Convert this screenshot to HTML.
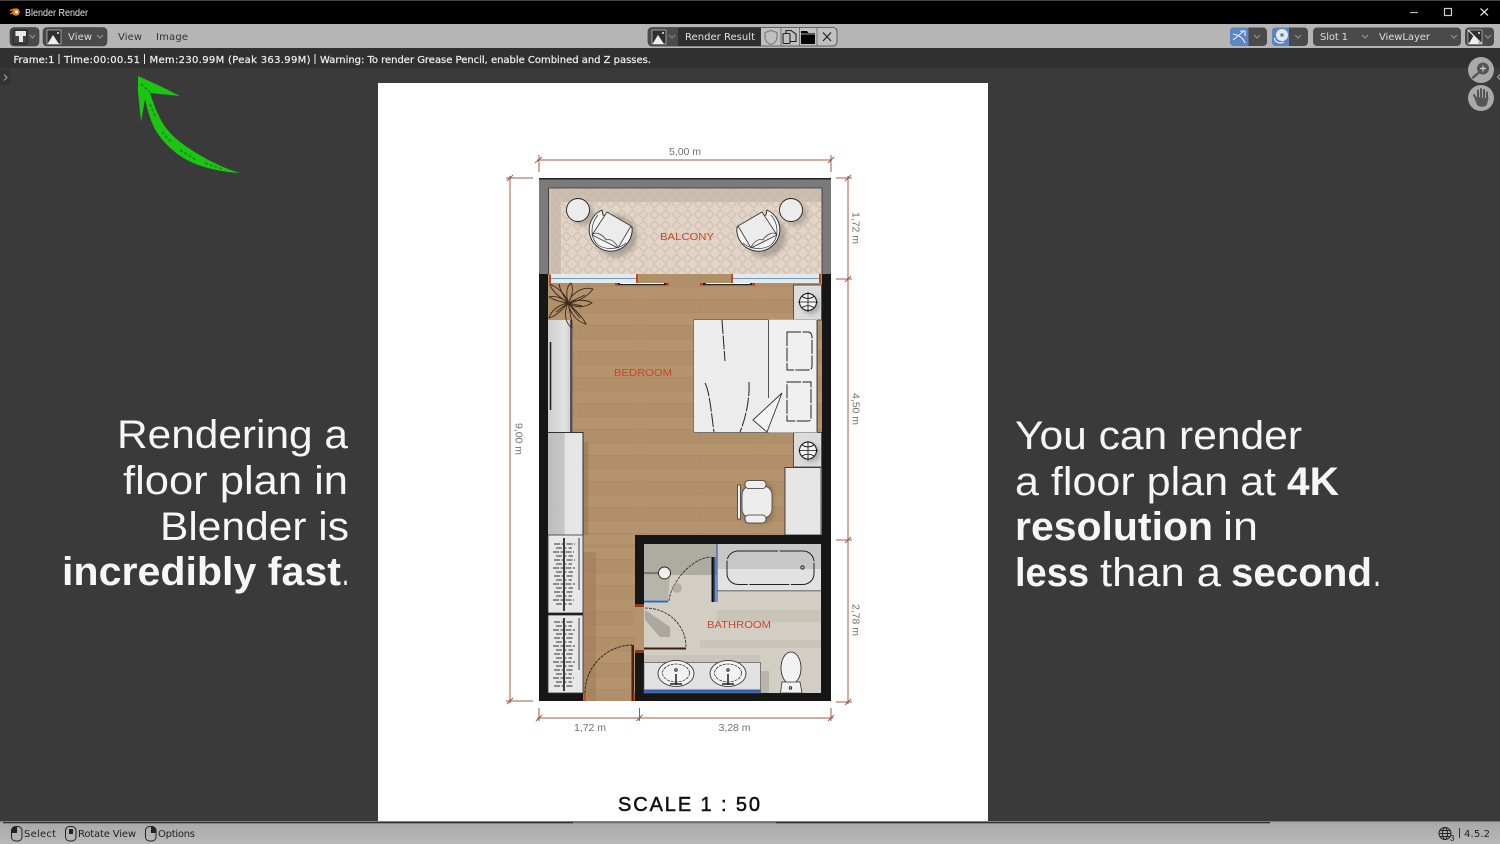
<!DOCTYPE html>
<html lang="en"><head><meta charset="utf-8"><title>Blender Render</title>
<style>
html,body{margin:0;padding:0;background:#3a3a3a;width:1500px;height:844px;overflow:hidden}
svg{display:block}
.ui{font-family:"DejaVu Sans","Liberation Sans",sans-serif;font-size:10px}
.info{font-family:"DejaVu Sans","Liberation Sans",sans-serif;font-size:10px;fill:#ececec;stroke:#ececec;stroke-width:.25}
.big{font-family:"Liberation Sans",sans-serif;font-size:40px;fill:#f6f6f6}
.b{font-weight:700}
.dim{font-family:"Liberation Sans",sans-serif;font-size:10.5px;fill:#707070}
.lab{font-family:"Liberation Sans",sans-serif;font-size:10.5px;fill:#c8492a}
</style></head><body>
<svg width="1500" height="844" viewBox="0 0 1500 844" xmlns="http://www.w3.org/2000/svg">
<defs>
<pattern id="dia" width="11" height="11" patternUnits="userSpaceOnUse"><rect width="11" height="11" fill="#e2d5c7"/><path d="M5.500 1 10 5.500 5.500 10 1 5.500Z" fill="none" stroke="#d3c5b5" stroke-width="1.500"/></pattern>
<pattern id="wood" width="120" height="26" patternUnits="userSpaceOnUse"><rect width="120" height="26" fill="#b4936d"/><rect y="13" width="120" height="13" fill="#b08f69"/><path d="M0 .5H120M0 13.5H120" stroke="#a98a65" stroke-width=".7"/><path d="M40 0V13M100 13V26" stroke="#a98a65" stroke-width=".5"/></pattern>
<linearGradient id="bot" x1="0" x2="0" y1="0" y2="1"><stop offset="0" stop-color="#a8a8a8"/><stop offset="1" stop-color="#b8b8b8"/></linearGradient>
<linearGradient id="cl" x1="0" x2="1" y1="0" y2="0"><stop offset="0" stop-color="#bdbdbd"/><stop offset=".45" stop-color="#c6c6c6"/><stop offset=".5" stop-color="#e4e4e4"/><stop offset="1" stop-color="#e6e6e6"/></linearGradient>
<linearGradient id="cl2" x1="0" x2="1" y1="0" y2="0"><stop offset="0" stop-color="#cfcfcf"/><stop offset=".7" stop-color="#e2e2e2"/><stop offset="1" stop-color="#c8c8c8"/></linearGradient>
<filter id="sh" x="-30%" y="-30%" width="160%" height="160%"><feGaussianBlur stdDeviation="2.500"/></filter>
<filter id="soft" x="-5%" y="-5%" width="110%" height="110%"><feGaussianBlur stdDeviation=".35"/></filter>
</defs>

<rect width="1500" height="844" fill="#3a3a3a"/>
<rect width="1500" height="24" fill="#000"/><rect width="1500" height="1" fill="#444"/>
<rect y="24" width="1500" height="24" fill="#b5b5b5"/>
<rect y="48" width="1500" height="20" fill="#303030"/>

<!-- title bar -->
<g>
<circle cx="16" cy="12" r="3.800" fill="#e87d0d"/><path d="M10 10.500 14 9M10.500 14 14 12" stroke="#e87d0d" stroke-width="1.300"/><circle cx="16.500" cy="12" r="1.500" fill="#fff"/>
<text x="25" y="16" font-family="Liberation Sans,sans-serif" font-size="10.500" fill="#e8e8e8" textLength="63" lengthAdjust="spacingAndGlyphs">Blender Render</text>
<path d="M1410 12.500H1418" stroke="#bbb" stroke-width="1.200"/>
<rect x="1444.500" y="8.500" width="7" height="7" fill="none" stroke="#ccc" stroke-width="1.200"/>
<path d="M1480.500 8.500 1488 15.500M1488 8.500 1480.500 15.500" stroke="#ddd" stroke-width="1.200"/>
</g>

<!-- top toolbar -->
<g>
<rect x="10" y="27.500" width="29" height="18.500" rx="4" fill="#4a4a4a" stroke="#3a3a3a" stroke-width=".6"/>
<rect x="13" y="30" width="14" height="14" rx="1" fill="#444" stroke="#222" stroke-width="1"/>
<path d="M15.500 31H26V36H23V42H19V36H15.500Z" fill="#e8e8e8"/>
<path d="M30 35 32.500 38 35 35" fill="none" stroke="#999" stroke-width="1"/>
<rect x="43" y="27.500" width="64" height="18.500" rx="4" fill="#4a4a4a" stroke="#3a3a3a" stroke-width=".6"/>
<rect x="47" y="30" width="14" height="14" fill="#2f2f2f" stroke="#ddd" stroke-width=".6"/>
<path d="M47.500 44 53 35 59 44Z" fill="#eee"/><circle cx="58" cy="33" r="1" fill="#eee"/>
<text class="ui" x="68" y="40" fill="#ddd" textLength="24">View</text>
<path d="M97 35 100 38 103 35" fill="none" stroke="#999" stroke-width="1"/>
<text class="ui" x="118" y="40" fill="#333" textLength="24">View</text>
<text class="ui" x="156" y="40" fill="#333" textLength="32">Image</text>

<rect x="648" y="27.500" width="189" height="18.500" rx="4" fill="#c0c0c0" stroke="#444" stroke-width=".8"/>
<path d="M652 27.500H678V46H652a4 4 0 0 1-4-4V31.500a4 4 0 0 1 4-4Z" fill="#4a4a4a"/>
<rect x="678" y="27.500" width="83" height="18.500" fill="#2f2f2f"/>
<rect x="652" y="30" width="14" height="14" fill="#2f2f2f" stroke="#ddd" stroke-width=".6"/>
<path d="M652.500 44 658 35 664 44Z" fill="#eee"/><circle cx="663" cy="33" r="1" fill="#eee"/>
<path d="M669 35 672 38 675 35" fill="none" stroke="#888" stroke-width="1"/>
<text class="ui" x="685" y="40" fill="#e2e2e2" textLength="70">Render Result</text>
<path d="M771 30.500 777 32.500V37C777 41 774 43.500 771 44.500 768 43.500 765 41 765 37V32.500Z" fill="none" stroke="#777" stroke-width="1.100"/>
<path d="M781 46V27.500M799.500 46V27.500M817 46V27.500" stroke="#555" stroke-width=".7"/>
<path d="M786 33.500V30.500H791L796 34V41.500H790" fill="none" stroke="#222" stroke-width="1.100"/><rect x="783" y="33.500" width="7" height="10" rx="1" fill="none" stroke="#222" stroke-width="1.100"/>
<path d="M801 31H807L808.500 33H815V44H801Z" fill="#000"/><path d="M801 34H815" stroke="#ccc" stroke-width=".8"/>
<path d="M823 32.500 831 41M831 32.500 823 41" stroke="#222" stroke-width="1.200"/>

<rect x="1230" y="27.500" width="37" height="18.500" rx="4" fill="#4a4a4a"/>
<path d="M1234 27.500H1248.500V46H1234a4 4 0 0 1-4-4V31.500a4 4 0 0 1 4-4Z" fill="#5a86c4"/>
<path d="M1233 34C1239 35 1243 38 1245 43M1233 40 1244 31M1240 31H1245V36" fill="none" stroke="#eef" stroke-width="1.100"/>
<path d="M1254 35 1257 38 1260 35" fill="none" stroke="#999" stroke-width="1"/>
<rect x="1272" y="27.500" width="36" height="18.500" rx="4" fill="#4a4a4a"/>
<path d="M1276 27.500H1289V46H1276a4 4 0 0 1-4-4V31.500a4 4 0 0 1 4-4Z" fill="#5a86c4"/>
<circle cx="1282" cy="35" r="6" fill="#e8e8e8"/><circle cx="1282" cy="35" r="1.800" fill="#5a86c4"/><path d="M1274.500 38C1274.500 42.500 1280 44 1284 42" fill="none" stroke="#eef" stroke-width="1.200"/>
<path d="M1295 35 1298 38 1301 35" fill="none" stroke="#999" stroke-width="1"/>
<rect x="1313" y="27.500" width="148" height="18.500" rx="4" fill="#4a4a4a"/>
<text class="ui" x="1320" y="40" fill="#ddd" textLength="28">Slot 1</text>
<path d="M1362 35 1365 38 1368 35M1451 35 1454 38 1457 35" fill="none" stroke="#999" stroke-width="1"/>
<text class="ui" x="1379" y="40" fill="#ddd" textLength="51">ViewLayer</text>
<rect x="1465" y="27.500" width="29" height="18.500" rx="4" fill="#4a4a4a"/>
<rect x="1468" y="30" width="14" height="14" fill="#2f2f2f" stroke="#ddd" stroke-width=".6"/>
<path d="M1468.500 44 1474 35 1480 44Z" fill="#eee"/><circle cx="1479" cy="33" r="1" fill="#eee"/><path d="M1468 30 1482 44" stroke="#eee" stroke-width="1.200"/>
<path d="M1485 35 1488 38 1491 35" fill="none" stroke="#999" stroke-width="1"/>
</g>

<!-- info line -->
<text class="info" x="13.500" y="63" textLength="41">Frame:1</text>
<path d="M59 54V64M144.500 54V64M315 54V64" stroke="#ececec" stroke-width="1"/>
<text class="info" x="64" y="63" textLength="76">Time:00:00.51</text>
<text class="info" x="149.500" y="63" textLength="161">Mem:230.99M (Peak 363.99M)</text>
<text class="info" x="320" y="63" textLength="331">Warning: To render Grease Pencil, enable Combined and Z passes.</text>

<!-- side tabs & gizmos -->
<rect x="0" y="69" width="10" height="16" rx="2" fill="#333"/>
<path d="M4 74.500 7 77.500 4 80.500" fill="none" stroke="#aaa" stroke-width="1"/>
<path d="M1500 74.500 1497.500 77 1500 79.500" fill="none" stroke="#aaa" stroke-width="1"/>
<circle cx="1481" cy="70" r="13" fill="#a9a9a9"/>
<circle cx="1483" cy="68.500" r="6" fill="#555"/><path d="M1483 65.500V71.500M1480 68.500H1486" stroke="#ccc" stroke-width="1.200"/><path d="M1478.500 73 1473 77.500" stroke="#555" stroke-width="2.400" stroke-linecap="round"/>
<circle cx="1481" cy="98" r="13" fill="#a9a9a9"/>
<path d="M1476 99 1474 95M1478 97V90.500M1481 97V89M1484 97V90M1487 98V92.500M1475 97 1478 104.500C1479 106 1485 106.500 1486 104L1487.500 98" stroke="#555" stroke-width="2" fill="#555" stroke-linecap="round"/>

<!-- paper -->
<rect x="378" y="83" width="610" height="738" fill="#fff"/>

<!-- plan -->
<g filter="url(#soft)">
<rect x="539" y="178" width="292" height="523" fill="#141414"/>
<rect x="539" y="178" width="292" height="96" fill="#7a7a7a"/>
<rect x="539" y="178" width="292" height="1.500" fill="#222"/>
<rect x="549" y="188" width="273" height="86" fill="url(#dia)"/>
<path d="M549 188H822V202H561V274H549Z" fill="#bfb0a0" opacity=".6"/>
<path d="M548.500 188V274M822 188V274M549 188H822" stroke="#333" stroke-width=".8" fill="none"/>
<rect x="548" y="274" width="274" height="261" fill="url(#wood)"/>
<rect x="583" y="535" width="52" height="166" fill="url(#wood)"/>
<rect x="583" y="552" width="13" height="149" fill="#a07c58" opacity=".55"/>
<rect x="583" y="535" width="52" height="8" fill="#b4936d"/>
<!-- balcony window -->
<rect x="550" y="274" width="87" height="9" fill="#e8e8e8"/>
<rect x="732" y="274" width="88" height="9" fill="#e8e8e8"/>
<path d="M550 278.500H637M732 278.500H820" stroke="#6a9cc9" stroke-width="1"/>
<path d="M550 274.500V283M637 274V283M732 274V283M820 274V283" stroke="#c5461c" stroke-width="2"/>
<rect x="617" y="283" width="51" height="2.200" fill="#222"/><rect x="620" y="283" width="44" height="1" fill="#fff"/>
<rect x="702" y="283" width="51" height="2.200" fill="#222"/><rect x="706" y="283" width="44" height="1" fill="#fff"/>
<rect x="615" y="283" width="3" height="2.500" fill="#b5431c"/><rect x="666" y="283" width="3" height="2.500" fill="#b5431c"/><rect x="700" y="283" width="3" height="2.500" fill="#b5431c"/><rect x="752" y="283" width="3" height="2.500" fill="#b5431c"/>

<!-- balcony furniture -->
<circle cx="583" cy="214" r="11.500" fill="#8a7f74" opacity=".5" filter="url(#sh)"/>
<circle cx="796" cy="214" r="11.500" fill="#8a7f74" opacity=".5" filter="url(#sh)"/>
<circle cx="578" cy="210" r="11.500" fill="#ececec" stroke="#222" stroke-width=".9"/>
<circle cx="791" cy="210" r="11.500" fill="#ececec" stroke="#222" stroke-width=".9"/>
<circle cx="616" cy="236" r="21" fill="#8a7f74" opacity=".55" filter="url(#sh)"/>
<circle cx="765" cy="236" r="21" fill="#8a7f74" opacity=".55" filter="url(#sh)"/>
<g id="chairL">
<path d="M602 210A21.500 21.500 0 1 0 632 227L626 226 603 215Z" fill="#f4f4f4" stroke="#222" stroke-width=".9"/>
<path d="M598 215C590 224 590 238 598 245 606 250 618 250 626 243" fill="none" stroke="#333" stroke-width=".7"/>
<path d="M607 212 631 226 618 248 592 235Z" fill="#ececec" stroke="#333" stroke-width=".8"/>
<path d="M592 235C596 230 604 236 606 240 610 238 616 242 618 248" fill="none" stroke="#333" stroke-width=".7"/>
</g>
<g transform="translate(1369,0) scale(-1,1)">
<path d="M602 210A21.500 21.500 0 1 0 632 227L626 226 603 215Z" fill="#f4f4f4" stroke="#222" stroke-width=".9"/>
<path d="M598 215C590 224 590 238 598 245 606 250 618 250 626 243" fill="none" stroke="#333" stroke-width=".7"/>
<path d="M607 212 631 226 618 248 592 235Z" fill="#ececec" stroke="#333" stroke-width=".8"/>
<path d="M592 235C596 230 604 236 606 240 610 238 616 242 618 248" fill="none" stroke="#333" stroke-width=".7"/>
</g>
<text class="lab" x="660" y="240" textLength="54" lengthAdjust="spacingAndGlyphs">BALCONY</text>

<!-- plant + left closet -->
<rect x="548" y="320" width="24" height="112" fill="url(#cl2)"/>
<rect x="570" y="320" width="2.500" height="112" fill="#555"/>
<path d="M550.500 342V410" stroke="#222" stroke-width="1.600"/>
<g fill="none" stroke="#3a2a1e" stroke-width=".9">
<path d="M568 303C558 296 551 290 550 284 558 288 566 294 568 303ZM568 303C566 294 566 287 571 283 574 289 572 297 568 303ZM568 303C572 293 582 286 593 289 588 296 578 302 568 303ZM568 303C578 299 588 300 592 303 584 308 575 308 568 303ZM568 303C574 309 582 316 586 324 577 322 570 313 568 303ZM568 303C570 312 572 320 572 328 564 322 564 312 568 303ZM568 303C562 310 556 316 549 318 551 311 558 305 568 303ZM568 303C560 302 554 300 549 297 556 295 562 298 568 303ZM568 303C563 295 560 290 559 284M568 303 585 295M568 303 582 306M568 303 580 318M568 303 556 312"/>
</g>
<!-- block -->
<rect x="548" y="432.500" width="35" height="102.500" fill="url(#cl)"/>
<path d="M548 432.500H583V535" fill="none" stroke="#333" stroke-width="1"/>
<rect x="583.500" y="442" width="5" height="93" fill="#96764f" opacity=".55"/>
<!-- wardrobes -->
<rect x="548" y="535" width="35" height="78" fill="#e8e8e8" stroke="#333" stroke-width=".8"/>
<rect x="548" y="615" width="35" height="78" fill="#e8e8e8" stroke="#333" stroke-width=".8"/>
<path d="M564 538V611M564 618V691" stroke="#111" stroke-width="1.600"/>
<path d="M579 538V590M579 618V670" stroke="#777" stroke-width="1.500"/>
<path d="M554 544H575M556 548H572M553 552H574M556 556H573M554 560H575M556 564H572M553 568H575M556 572H573M554 576H574M556 580H572M553 584H575M556 588H573M554 592H574M556 596H572M553 600H574M556 604H572M554 622H574M556 626H572M553 630H575M556 634H573M554 638H574M556 642H572M553 646H575M556 650H573M554 654H574M556 658H572M553 662H575M556 666H573M554 670H574M556 674H572M553 678H574M556 682H572M554 686H574" stroke="#333" stroke-width=".9" stroke-dasharray="6 1.500 3 2"/>
<!-- door -->
<path d="M585 693A48 48 0 0 1 632 645" fill="none" stroke="#222" stroke-width=".9" stroke-dasharray="3 1"/>
<rect x="631.500" y="645" width="2.500" height="56" fill="#4a2015"/>
<rect x="583.500" y="693" width="2" height="8" fill="#c5461c"/><rect x="633.500" y="693" width="2" height="8" fill="#c5461c"/>

<!-- nightstands -->
<rect x="793.500" y="285" width="28" height="35" fill="#dcdcdc" stroke="#444" stroke-width=".9"/>
<rect x="793.500" y="432.500" width="28" height="34.500" fill="#dcdcdc" stroke="#444" stroke-width=".9"/>
<circle cx="811" cy="305" r="9" fill="#888" opacity=".6" filter="url(#sh)"/><circle cx="811" cy="453" r="9" fill="#888" opacity=".6" filter="url(#sh)"/>
<g fill="#f2f2f2" stroke="#111" stroke-width="1"><circle cx="808" cy="302" r="8.500"/><circle cx="808" cy="450.500" r="8.500"/></g>
<path d="M808 292V312M798 302H818M802 296.500C806 299 810 299 814 296.500M802 307.500C806 305 810 305 814 307.500M808 441V460.500M798.500 450.500H818M802 445C806 447.500 810 447.500 814 445M802 456C806 453.500 810 453.500 814 456" stroke="#111" stroke-width=".8" fill="none"/>
<!-- desk -->
<rect x="785" y="467.500" width="36" height="67.500" fill="#e6e6e6" stroke="#333" stroke-width=".9"/>
<!-- bed -->
<rect x="693.500" y="319.500" width="124" height="113" rx="2" fill="#ececec" stroke="#555" stroke-width=".7"/>
<rect x="768.500" y="319.500" width="48.500" height="113" fill="#f0f0f0"/>
<path d="M768.500 320V398M817 320V432" stroke="#444" stroke-width=".9"/>
<g fill="none" stroke="#222" stroke-width="1" stroke-dasharray="14 1.500">
<path d="M787 332H808Q812 332 812 338V366Q812 370 808 370H787Z"/>
<path d="M787 382H811V418Q811 421 808 421H787Z"/>
<path d="M722 320 725 361"/><path d="M705 383C710 392 712 420 714 432"/><path d="M749 382C750 400 745 420 740 432"/>
</g>
<path d="M782 393 753 420 767 432Z" fill="#f4f4f4" stroke="#333" stroke-width=".9"/>
<!-- chair -->
<rect x="743" y="483" width="30" height="40" rx="8" fill="#7a5e42" opacity=".55" filter="url(#sh)"/>
<rect x="742" y="486" width="30" height="32" rx="9" fill="#ececec" stroke="#444" stroke-width=".8"/>
<rect x="745" y="480.500" width="21" height="8" rx="3.500" fill="#eee" stroke="#333" stroke-width=".8"/>
<rect x="745" y="515" width="21" height="8" rx="3.500" fill="#eee" stroke="#333" stroke-width=".8"/>
<rect x="737.500" y="485" width="3" height="34" fill="#f4f4f4" stroke="#222" stroke-width=".7"/>
<text class="lab" x="614" y="376" textLength="58" lengthAdjust="spacingAndGlyphs">BEDROOM</text>

<!-- bathroom -->
<path d="M635 535H831V701H635V650H644V693H821V544H644V607H635Z" fill="#141414"/>
<rect x="644" y="544" width="177" height="149" fill="#d3cec3"/>
<path d="M717 610H821V622H717ZM644 655H760V662H644ZM700 640H821V648H700Z" fill="#cac4b8"/>
<rect x="644" y="544" width="73" height="31" fill="#aeaba1"/>
<path d="M644 575H670L668 600H644Z" fill="#b7b4aa"/>
<path d="M645 610 670 627V637H660L645 620Z" fill="#aba89f"/>
<rect x="635" y="607" width="9" height="43" fill="#b4936d"/>
<rect x="635" y="604" width="9" height="3" fill="#8a3a1e"/><rect x="635" y="650" width="9" height="3" fill="#8a3a1e"/>
<!-- tub -->
<rect x="717" y="544" width="104" height="47" fill="#e2e2e2"/>
<rect x="717" y="544" width="104" height="25" fill="#c7c7c7"/>
<rect x="727" y="551" width="87" height="33.500" rx="11" fill="none" stroke="#222" stroke-width="1" stroke-dasharray="40 1.500"/>
<circle cx="802.500" cy="567.500" r="1.700" fill="none" stroke="#222"/>
<rect x="717" y="590" width="104" height="1.500" fill="#888"/>
<rect x="711.500" y="557" width="4" height="45" fill="#2c4f8e"/><rect x="711.500" y="557" width="2" height="45" fill="#111"/>
<rect x="716.500" y="544" width="1" height="58" fill="#264a90"/>
<rect x="644" y="600.500" width="24" height="2" fill="#2f67bd"/>
<path d="M669 601C670 585 690 558 711 557" fill="none" stroke="#222" stroke-width=".8" stroke-dasharray="3 1"/>
<circle cx="664.500" cy="573" r="6" fill="#f0f0f0" stroke="#222" stroke-width=".9"/>
<path d="M644 573H658" stroke="#555" stroke-width="1.200"/>
<circle cx="677" cy="588" r="5" fill="#a09d94" opacity=".6"/>
<path d="M645 608C668 608 686 625 686 647" fill="none" stroke="#222" stroke-width=".8" stroke-dasharray="3 1"/>
<rect x="644" y="647.500" width="42" height="2" fill="#3e1b10"/>
<text class="lab" x="707" y="628" textLength="64" lengthAdjust="spacingAndGlyphs">BATHROOM</text>
<!-- vanity -->
<rect x="761" y="671" width="8" height="22" fill="#a9a59a" opacity=".6"/>
<rect x="644" y="662.500" width="116.500" height="30.500" fill="#e2e2e2" stroke="#555" stroke-width=".7"/>
<rect x="644" y="689.500" width="116.500" height="3" fill="#2f62b8"/>
<g fill="#f2f2f2" stroke="#222" stroke-width=".8"><ellipse cx="676" cy="673.500" rx="18" ry="13"/><ellipse cx="728" cy="673.500" rx="18" ry="13"/></g>
<g fill="none" stroke="#222" stroke-width=".7" stroke-dasharray="3 1"><ellipse cx="676" cy="673" rx="13.500" ry="9"/><ellipse cx="728" cy="673" rx="13.500" ry="9"/></g>
<path d="M676 674V685M670 684H682M728 674V685M722 684H734" stroke="#222" stroke-width="1.500"/>
<circle cx="676" cy="670" r="1.200" fill="none" stroke="#222"/><circle cx="728" cy="670" r="1.200" fill="none" stroke="#222"/>
<!-- toilet -->
<ellipse cx="791" cy="668" rx="10" ry="16" fill="#f2f2f2" stroke="#222" stroke-width=".8"/>
<path d="M780.500 693 782 682H800L802 693Z" fill="#f2f2f2" stroke="#333" stroke-width=".8"/>
<circle cx="790.500" cy="688" r="1.200" fill="none" stroke="#222"/>
</g>

<!-- dimensions -->
<g stroke="#a05a4a" stroke-width="1" fill="none">
<path d="M537 160H832M539 155V172M831 155V172M535 163 542 157M828 163 834 157"/>
<path d="M510 176V703M506 178H533M506 701H533M507 181 513 175M507 704 513 698"/>
<path d="M848 176V704M836 178H852M836 279H852M836 540H852M836 702H852M845 181 851 175M845 282 851 276M845 543 851 537M845 705 851 699"/>
<path d="M537 718H833M539 708V721M639.500 708V721M831 708V721M536 721 542 715M636.500 721 642.500 715M828 721 834 715"/>
</g>
<text class="dim" x="669" y="155" textLength="32">5,00 m</text>
<text class="dim" x="574" y="731" textLength="32">1,72 m</text>
<text class="dim" x="718.500" y="731" textLength="32">3,28 m</text>
<text class="dim" transform="translate(852.500,212) rotate(90)" textLength="32">1,72 m</text>
<text class="dim" transform="translate(852.500,393) rotate(90)" textLength="32">4,50 m</text>
<text class="dim" transform="translate(852.500,604) rotate(90)" textLength="32">2,78 m</text>
<text class="dim" transform="translate(515.500,423) rotate(90)" textLength="32">9,00 m</text>
<text x="618" y="811" font-family="Liberation Sans,sans-serif" font-size="20" fill="#111" stroke="#111" stroke-width=".5" textLength="142" lengthAdjust="spacing">SCALE 1 : 50</text>

<!-- arrow -->
<path d="M138 76 160 86 180 96 160 94 150 93C154 105 158 116 164 125 170 134 177 140 187 147 200 156 222 168 240 173 220 172 200 167 187 160 174 153 163 142 156 131 151 122 148 112 145 99L141 122 138 92Z" fill="#1cc414"/>
<path d="M141 84 150 92M150 104 156 118M162 132 172 143M180 150 196 160M205 163 222 169" stroke="#13980d" stroke-width="2" stroke-dasharray="3 2" fill="none"/>

<!-- big text -->
<g>
<text class="big" x="117" y="448" textLength="231" lengthAdjust="spacingAndGlyphs">Rendering a</text>
<text class="big" x="123" y="494" textLength="225" lengthAdjust="spacingAndGlyphs">floor plan in</text>
<text class="big" x="160" y="540" textLength="189" lengthAdjust="spacingAndGlyphs">Blender is</text>
<text class="big b" x="62" y="585" textLength="279" lengthAdjust="spacingAndGlyphs">incredibly fast</text>
<text class="big" x="342" y="585" textLength="7" lengthAdjust="spacingAndGlyphs">.</text>
<text class="big" x="1015" y="449" textLength="287" lengthAdjust="spacingAndGlyphs">You can render</text>
<text class="big" x="1015" y="495" textLength="261" lengthAdjust="spacingAndGlyphs">a floor plan at</text>
<text class="big b" x="1287" y="495" textLength="52" lengthAdjust="spacingAndGlyphs">4K</text>
<text class="big b" x="1015" y="540" textLength="198" lengthAdjust="spacingAndGlyphs">resolution</text>
<text class="big" x="1223" y="540" textLength="35" lengthAdjust="spacingAndGlyphs">in</text>
<text class="big b" x="1015" y="586" textLength="74" lengthAdjust="spacingAndGlyphs">less</text>
<text class="big" x="1100" y="586" textLength="121" lengthAdjust="spacingAndGlyphs">than a</text>
<text class="big b" x="1231" y="586" textLength="141" lengthAdjust="spacingAndGlyphs">second</text>
<text class="big" x="1373" y="586" textLength="8" lengthAdjust="spacingAndGlyphs">.</text>
</g>

<!-- bottom bar -->
<rect y="821" width="1500" height="23" fill="url(#bot)"/>
<rect y="821" width="1500" height="1.200" fill="#7e7e7e"/>
<path d="M3 822.800H573M776 822.800H1270" stroke="#111" stroke-width="1"/>
<path d="M573 822.800H776" stroke="#666" stroke-width="1"/>
<g fill="none" stroke="#222" stroke-width="1">
<rect x="11.500" y="826.500" width="10.500" height="14.500" rx="4"/><rect x="65.500" y="826.500" width="10.500" height="14.500" rx="4"/><rect x="145.500" y="826.500" width="10.500" height="14.500" rx="4"/>
</g>
<path d="M11.500 831V830a4 4 0 0 1 4-3.500H17V833H11.500ZM69 829H73V834H69ZM151 826.500H152a4 4 0 0 1 4 4V833H151Z" fill="#222"/>
<text class="ui" x="24" y="837" fill="#222" textLength="32">Select</text>
<text class="ui" x="78" y="837" fill="#222" textLength="58">Rotate View</text>
<text class="ui" x="158" y="837" fill="#222" textLength="37">Options</text>
<g fill="none" stroke="#222" stroke-width="1"><circle cx="1445" cy="833.500" r="6"/><ellipse cx="1445" cy="833.500" rx="2.500" ry="6"/><path d="M1439 833.500H1451M1440 830.500H1450M1440 836.500H1450"/></g>
<text x="1450" y="841" font-family="Liberation Sans,sans-serif" font-size="8" fill="#222">3</text>
<path d="M1459.500 828V838" stroke="#333" stroke-width="1"/>
<text class="ui" x="1464" y="837" fill="#222" textLength="26">4.5.2</text>
</svg>
</body></html>
